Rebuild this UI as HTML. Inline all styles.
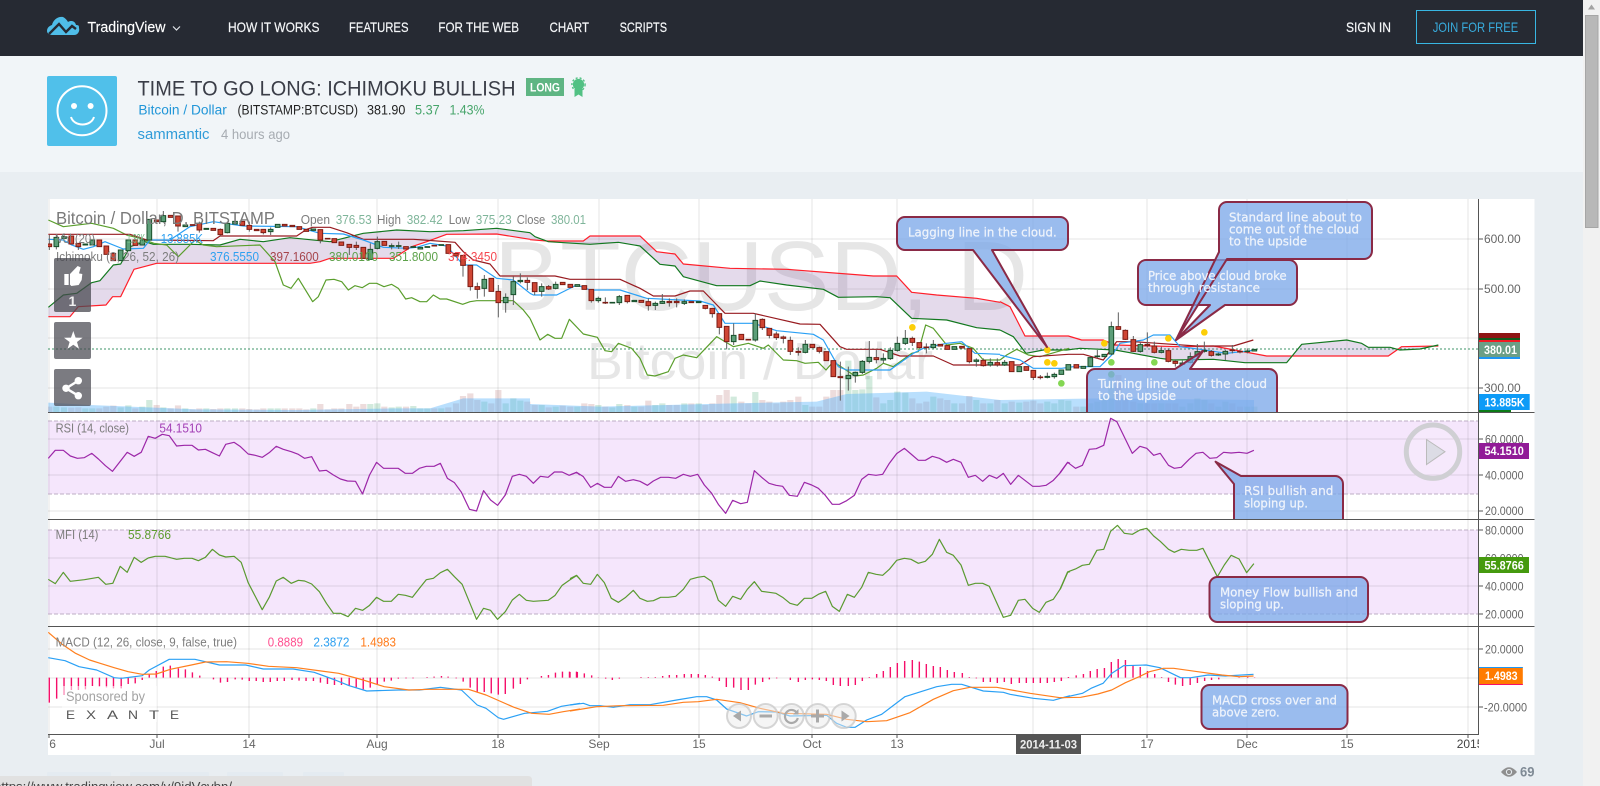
<!DOCTYPE html>
<html><head><meta charset="utf-8"><title>TIME TO GO LONG: ICHIMOKU BULLISH</title>
<style>
html,body{margin:0;padding:0;width:1600px;height:786px;overflow:hidden;background:#e9eef2}
svg{display:block;position:absolute;left:0;top:0}
svg *{vector-effect:non-scaling-stroke}
text{font-family:"Liberation Sans",Arial,sans-serif}
.ln{fill:none;stroke-width:1.2;stroke-linejoin:round}
.g{fill:#7d7d7d;font-size:12.5px}
.ax{fill:#666;font-size:12px}
.call{font-family:"DejaVu Sans",sans-serif;font-size:12.5px;fill:#eef3fb;stroke:#eef3fb;stroke-width:.25}
.box{fill:rgba(120,165,232,.75);stroke:#8a2a46;stroke-width:2;stroke-linejoin:round}
.wh{fill:#fff;font-weight:bold;font-size:12px}
.nav{fill:#f4f6f8;font-size:14px;stroke:#f4f6f8;stroke-width:.2}
</style></head><body>
<svg width="1600" height="786" viewBox="0 0 1600 786" xmlns="http://www.w3.org/2000/svg">
<defs>
<clipPath id="main"><rect x="48" y="199" width="1431" height="213"/></clipPath>
<clipPath id="rsi"><rect x="48" y="412" width="1431" height="107"/></clipPath>
<clipPath id="all"><rect x="48" y="199" width="1431" height="535"/></clipPath>
<clipPath id="ax"><rect x="48" y="734" width="1431" height="21"/></clipPath>
</defs>

<!-- header -->
<rect x="0" y="56" width="1583" height="116" fill="#f1f5f8"/>
<rect x="0" y="0" width="1583" height="56" fill="#262a33"/>
<path d="M47 31c0-3 2-5 5-6c1-5 6-9 11-8c2 1 4 3 5 5c3-2 7-1 8 3c3 0 3 1 3 3c1 3-1 7-5 7H52c-3 0-5-2-5-4z" fill="#4fbde8"/>
<path d="M49 34L59 24L66 32L72 26L76 29" fill="none" stroke="#262a33" stroke-width="2.4"/>
<text x="87.5" y="32" fill="#fff" font-size="15" textLength="78" lengthAdjust="spacingAndGlyphs" stroke="#fff" stroke-width=".15">TradingView</text>
<path d="M173 26.5L176.5 30L180 26.5" fill="none" stroke="#dfe3e8" stroke-width="1.2"/>
<text class="nav" x="228" y="32" textLength="91.5" lengthAdjust="spacingAndGlyphs">HOW IT WORKS</text>
<text class="nav" x="349" y="32" textLength="59.5" lengthAdjust="spacingAndGlyphs">FEATURES</text>
<text class="nav" x="438.4" y="32" textLength="80.6" lengthAdjust="spacingAndGlyphs">FOR THE WEB</text>
<text class="nav" x="549.5" y="32" textLength="39.5" lengthAdjust="spacingAndGlyphs">CHART</text>
<text class="nav" x="619.6" y="32" textLength="47.4" lengthAdjust="spacingAndGlyphs">SCRIPTS</text>
<text class="nav" x="1346" y="32" textLength="45" lengthAdjust="spacingAndGlyphs">SIGN IN</text>
<rect x="1416.5" y="10.5" width="119" height="33" fill="none" stroke="#38b6e2"/>
<text x="1432.7" y="32" fill="#38aadb" font-size="14" textLength="85.5" lengthAdjust="spacingAndGlyphs">JOIN FOR FREE</text>

<rect x="47" y="76" width="70" height="70" rx="2" fill="#50c0ea"/>
<circle cx="82" cy="110.7" r="24.5" fill="none" stroke="#fff" stroke-width="2"/>
<circle cx="74" cy="106" r="3" fill="#fff"/><circle cx="90.6" cy="106" r="3" fill="#fff"/>
<path d="M71 117c3 10 20 10 23 0" fill="none" stroke="#fff" stroke-width="2"/>

<text x="137.5" y="95.5" fill="#3a3d47" font-size="21" textLength="378" lengthAdjust="spacingAndGlyphs">TIME TO GO LONG: ICHIMOKU BULLISH</text>
<rect x="526" y="78" width="38" height="18" fill="#5fb583"/>
<text x="530" y="91.5" fill="#fff" font-weight="bold" font-size="12" textLength="30" lengthAdjust="spacingAndGlyphs">LONG</text>
<path d="M574.5 89h8v8l-4-2.5l-4 2.5z" fill="#52c184"/>
<circle cx="578.5" cy="84.5" r="5.6" fill="#52c184"/>
<circle cx="578.5" cy="84.5" r="6.6" fill="none" stroke="#52c184" stroke-width="1.4" stroke-dasharray="2 2"/>

<text x="138.4" y="114.5" fill="#2196d8" font-size="13.5" textLength="88.4" lengthAdjust="spacingAndGlyphs">Bitcoin / Dollar</text>
<text x="237.5" y="114.5" fill="#222" font-size="13.5" textLength="120.5" lengthAdjust="spacingAndGlyphs">(BITSTAMP:BTCUSD)</text>
<text x="367" y="114.5" fill="#222" font-size="13.5" textLength="38.4" lengthAdjust="spacingAndGlyphs">381.90</text>
<text x="415" y="114.5" fill="#47a56b" font-size="13.5" textLength="24.7" lengthAdjust="spacingAndGlyphs">5.37</text>
<text x="449.5" y="114.5" fill="#47a56b" font-size="13.5" textLength="35" lengthAdjust="spacingAndGlyphs">1.43%</text>
<text x="137.5" y="139" fill="#2f9bd8" font-size="15" textLength="72" lengthAdjust="spacingAndGlyphs">sammantic</text>
<text x="221" y="139" fill="#a7acb2" font-size="14" textLength="69" lengthAdjust="spacingAndGlyphs">4 hours ago</text>

<!-- chart base -->
<rect x="48" y="199" width="1486.500" height="556" fill="#fff"/>
<rect x="48" y="421" width="1431" height="73" fill="#f5e6fc"/>
<rect x="48" y="530" width="1431" height="84" fill="#f5e6fc"/>

<!-- grid -->
<path d="M49 199V734M157 199V734M249 199V734M377 199V734M498 199V734M599 199V734M699 199V734M812 199V734M897 199V734M1033 199V734M1147 199V734M1247 199V734M1347 199V734M1468 199V734" stroke="rgba(0,0,0,.1)" fill="none"/>
<path d="M48 239H1479M48 289H1479M48 338H1479M48 388H1479M48 439H1479M48 475H1479M48 511H1479M48 558H1479M48 586H1479M48 649H1479M48 678H1479M48 707H1479" stroke="rgba(0,0,0,.1)" fill="none"/>
<path d="M48 421H1479M48 494H1479M48 530H1479M48 614H1479" stroke="#bdaec4" stroke-dasharray="4 2" fill="none"/>

<g clip-path="url(#main)">
<text x="494" y="310" font-size="98" fill="#e6e6e6" textLength="534" lengthAdjust="spacingAndGlyphs">BTCUSD, D</text>
<text x="587" y="379" font-size="52" fill="#e6e6e6" textLength="346" lengthAdjust="spacingAndGlyphs">Bitcoin / Dollar</text>

<!-- volume bars -->
<g transform="translate(30 190) scale(.33333)" fill="none" stroke-width="6.2">
<path stroke="rgba(165,80,80,.2)" d="M58 650V666M124 653V666M145 652V666M208 655V666M229 650V666M250 647V666M316 655V666M380 645V666M422 655V666M444 646V666M488 658V666M508 655V666M550 657V666M571 655V666M637 655V666M658 657V666M680 658V666M700 655V666M764 655V666M787 655V666M808 655V666M829 658V666M871 642V666M893 658V666M913 655V666M934 655V666M958 642V666M979 650V666M1000 642V666M1063 650V666M1128 650V666M1213 655V666M1255 652V666M1278 640V666M1299 618V666M1321 610V666M1342 630V666M1384 640V666M1405 600V666M1492 635V666"/>
<path stroke="rgba(50,160,100,.22)" d="M79 650V666M102 652V666M166 655V666M187 655V666M272 652V666M295 646V666M337 650V666M358 630V666M400 652V666M466 655V666M529 655V666M592 655V666M615 655V666M722 655V666M743 655V666M850 655V666M1021 642V666M1042 640V666M1085 652V666M1106 650V666M1150 648V666M1171 655V666M1192 655V666M1234 655V666M1363 635V666M1427 640V666M1450 625V666M1471 632V666"/>
</g>
<g transform="translate(500 190) scale(.33333)" fill="none" stroke-width="6.2">
<path stroke="rgba(165,80,80,.2)" d="M104 645V666M146 652V666M188 647V666M211 650V666M253 640V666M274 642V666M316 650V666M382 645V666M424 650V666M445 632V666M508 645V666M530 645V666M574 640V666M616 645V666M637 640V666M658 615V666M680 600V666M724 635V666M745 640V666M787 630V666M808 635V666M829 640V666M850 635V666M871 630V666M895 620V666M937 650V666M958 650V666M979 620V666M1000 600V666M1021 600V666M1129 622V666M1237 625V666M1258 640V666M1279 635V666M1321 625V666M1342 630V666M1386 640V666M1408 618V666M1450 640V666M1492 630V666"/>
<path stroke="rgba(50,160,100,.22)" d="M125 645V666M167 650V666M232 650V666M295 645V666M337 652V666M358 642V666M403 650V666M466 645V666M487 640V666M553 640V666M596 640V666M701 620V666M766 606V666M916 645V666M1045 512V666M1066 600V666M1087 598V666M1108 558V666M1150 640V666M1171 630V666M1192 605V666M1216 608V666M1300 620V666M1363 640V666M1429 630V666M1471 640V666"/>
</g>
<g transform="translate(1000 190) scale(.33333)" fill="none" stroke-width="6.2">
<path stroke="rgba(165,80,80,.2)" d="M35 635V666M79 635V666M100 632V666M121 640V666M229 650V666M355 555V666M376 620V666M400 635V666M442 640V666M463 640V666M505 640V666M526 640V666M634 640V666M697 640V666M720 650V666"/>
<path stroke="rgba(50,160,100,.22)" d="M14 640V666M58 638V666M142 635V666M163 640V666M184 630V666M205 632V666M250 650V666M271 640V666M292 635V666M313 620V666M334 555V666M421 640V666M484 640V666M547 650V666M571 640V666M592 625V666M613 630V666M655 650V666M676 635V666M742 650V666M763 650V666"/>
</g>

<!-- volume MA area (over bars) -->
<g transform="translate(30 190) scale(.33333)">
<path d="M55 638L180 645L500 658L800 660L1100 655L1200 655L1300 625L1500 625L1500 670L55 670z" fill="rgba(80,175,250,.4)"/>
</g>
<g transform="translate(500 190) scale(.33333)">
<path d="M90 642L300 650L500 645L700 640L950 635L1040 612L1280 605L1500 630L1500 670L90 670z" fill="rgba(80,175,250,.4)"/>
</g>
<g transform="translate(1000 190) scale(.33333)">
<path d="M0 630L300 625L762 630L762 670L0 670z" fill="rgba(80,175,250,.4)"/>
</g>

<!-- dotted last price -->
<path d="M48 349H1479" stroke="#3f9468" stroke-dasharray="2 2" fill="none"/>

<!-- cloud + lines segment 1 -->
<g transform="translate(30 190) scale(.33333)">
<path fill="rgba(130,85,165,.22)" d="M55 352L100 315L140 310L185 278L210 272L250 225L272 222L300 170L345 155L370 163L480 163L570 165L630 148L700 155L780 143L900 155L1000 130L1100 120L1200 125L1300 122L1400 115L1500 128L1500 148L1400 132L1250 133L1190 155L1145 170L1090 205L900 205L870 215L840 220L380 220L312 238L272 320L248 320L228 345L145 350L120 380L55 380z"/>
<polyline class="ln" stroke="#ff1f2a" points="55,380 120,380 145,350 228,345 248,320 272,320 312,238 380,220 840,220 870,215 900,205 1090,205 1145,170 1190,155 1250,133 1400,132 1500,148"/>
<polyline class="ln" stroke="#12781f" points="55,352 100,315 140,310 185,278 210,272 250,225 272,222 300,170 345,155 370,163 480,163 570,165 630,148 700,155 780,143 900,155 1000,130 1100,120 1200,125 1300,122 1400,115 1500,128"/>
<polyline class="ln" stroke="#5a9e2c" points="55,90 100,110 185,100 250,115 290,135 330,145 372,160 410,165 445,200 495,150 520,165 560,170 690,165 735,215 760,285 783,295 805,265 848,335 865,320 888,270 912,268 935,275 955,300 975,287 997,293 1018,280 1040,280 1062,290 1085,283 1105,295 1127,327 1145,323 1170,335 1190,335 1210,315 1230,327 1250,327 1298,343 1320,335 1340,332 1450,332 1480,360 1500,385"/>
<polyline class="ln" stroke="#981b20" points="55,133 300,133 350,150 550,152 570,138 800,138 830,118 848,112 900,112 950,128 1000,148 1150,148 1180,150 1275,157 1300,185 1330,210 1380,222 1410,258 1500,258"/>
<polyline class="ln" stroke="#2aa0f5" points="55,148 100,150 125,165 160,178 190,170 225,155 280,177 340,175 360,150 420,150 480,110 550,95 640,108 800,110 870,130 940,132 1000,150 1060,172 1130,175 1160,172 1200,160 1250,168 1300,225 1340,225 1400,265 1450,270 1500,310"/>
<path fill="none" stroke="#5f5f5f" d="M58 135V180M79 135V178M102 130V150M145 160V180M400 63V98M444 78V125M508 95V128M571 115V138M592 95V130M658 95V125M700 118V133M722 112V135M871 119V160M958 163V195M979 155V180M1021 160V210M1042 140V178M1085 160V178M1106 155V177M1299 196V260M1321 226V302M1342 278V326M1363 255V320M1405 285V382M1427 310V368M1450 260V345M1471 250V280M1492 262V300"/>
<path fill="#cf4634" stroke="#7d1c14" d="M51 162h14v8h-14zM117 138h14v24h-14zM138 160h14v10h-14zM201 150h14v20h-14zM222 168h14v25h-14zM243 190h14v22h-14zM309 150h14v16h-14zM373 90h14v5h-14zM415 76h14v6h-14zM437 78h14v30h-14zM481 104h14v2h-14zM501 100h14v20h-14zM543 115h14v6h-14zM564 118h14v16h-14zM630 94h14v12h-14zM651 106h14v12h-14zM673 118h14v4h-14zM693 118h14v10h-14zM757 103h14v5h-14zM780 106h14v4h-14zM801 110h14v8h-14zM822 118h14v6h-14zM864 119h14v31h-14zM886 145h14v2h-14zM906 146h14v12h-14zM927 156h14v10h-14zM951 163h14v9h-14zM972 166h14v6h-14zM993 172h14v33h-14zM1056 154h14v12h-14zM1121 170h14v7h-14zM1206 166h14v2h-14zM1248 164h14v26h-14zM1271 190h14v8h-14zM1292 196h14v30h-14zM1314 226h14v64h-14zM1335 290h14v8h-14zM1377 265h14v39h-14zM1398 304h14v34h-14zM1485 271h14v6h-14z"/>
<path fill="#5c9e78" stroke="#184f2a" d="M72 142h14v28h-14zM95 140h14v5h-14zM159 162h14v3h-14zM180 150h14v15h-14zM265 180h14v32h-14zM288 150h14v32h-14zM330 150h14v15h-14zM351 88h14v62h-14zM393 77h14v18h-14zM459 105h14v5h-14zM522 115h14v3h-14zM585 100h14v28h-14zM608 94h14v8h-14zM715 118h14v7h-14zM736 103h14v9h-14zM843 117h14v4h-14zM1014 178h14v30h-14zM1035 155h14v20h-14zM1078 167h14v2h-14zM1099 167h14v2h-14zM1143 170h14v2h-14zM1164 172h14v5h-14zM1185 170h14v2h-14zM1227 164h14v2h-14zM1356 268h14v27h-14zM1420 322h14v16h-14zM1443 275h14v39h-14zM1464 271h14v4h-14z"/>
</g>

<!-- segment 2 -->
<g transform="translate(500 190) scale(.33333)">
<path fill="rgba(130,85,165,.22)" d="M90 128L105 140L145 155L270 163L355 157L420 168L480 223L525 228L550 260L650 287L750 287L780 273L860 285L970 298L1015 322L1130 320L1170 323L1235 385L1340 390L1430 413L1500 420L1500 337L1430 325L1310 315L1235 307L1190 258L1120 258L860 238L690 235L550 222L525 192L470 185L420 138L270 138L250 153L140 153L90 149z"/>
<polyline class="ln" stroke="#ff1f2a" points="90,149 140,153 250,153 270,138 420,138 470,185 525,192 550,222 690,235 860,238 1120,258 1190,258 1235,307 1310,315 1430,325 1500,337"/>
<polyline class="ln" stroke="#12781f" points="90,128 105,140 145,155 270,163 355,157 420,168 480,223 525,228 550,260 650,287 750,287 780,273 860,285 970,298 1015,322 1130,320 1170,323 1235,385 1340,390 1430,413 1500,420"/>
<polyline class="ln" stroke="#5a9e2c" points="90,385 120,450 143,433 165,445 185,445 208,388 250,432 292,442 315,482 335,485 355,460 395,475 420,505 442,555 465,558 505,545 525,505 550,495 590,503 650,440 680,458 700,470 745,460 790,475 805,465 850,510 890,512 915,520 955,517 978,540 1000,515 1065,558 1090,555 1130,535 1150,520 1180,530 1235,490 1255,485 1277,405 1300,415 1340,465 1380,460 1420,475 1450,510 1500,510"/>
<polyline class="ln" stroke="#981b20" points="90,258 165,258 210,268 360,268 420,295 460,318 525,318 570,303 610,303 675,370 760,370 900,402 960,403 1020,470 1040,478 1140,478 1200,498 1300,498 1360,525 1500,525"/>
<polyline class="ln" stroke="#2aa0f5" points="90,310 100,315 170,315 230,285 270,300 360,300 440,325 600,333 640,345 675,400 760,400 830,422 940,433 970,450 1015,530 1040,540 1170,540 1240,490 1270,475 1340,460 1385,455 1425,490 1500,493"/>
<path fill="none" stroke="#5f5f5f" d="M104 278V315M125 280V320M146 285V300M167 275V298M274 298V338M295 320V338M316 322V342M358 315V345M382 315V340M445 325V362M466 335V360M487 312V342M508 325V350M530 325V352M553 328V345M616 346V358M637 355V383M658 371V433M680 455V478M701 400V465M766 370V455M787 385V420M808 415V445M829 425V450M850 437V460M871 440V495M895 472V497M916 450V490M958 470V490M1000 512V560M1021 515V632M1045 530V602M1066 545V578M1087 510V552M1108 453V520M1129 480V520M1150 490V520M1171 472V510M1192 440V485M1216 420V465M1237 440V468M1279 460V490M1300 450V475M1408 476V520M1429 505V530M1450 505V530M1471 505V530M1492 505V530"/>
<path fill="#cf4634" stroke="#7d1c14" d="M97 278h14v27h-14zM139 290h14v7h-14zM181 277h14v7h-14zM204 283h14v9h-14zM246 287h14v11h-14zM267 298h14v34h-14zM309 337h14v2h-14zM375 316h14v19h-14zM417 331h14v6h-14zM438 335h14v12h-14zM501 334h14v4h-14zM523 334h14v4h-14zM567 335h14v3h-14zM609 346h14v9h-14zM630 355h14v16h-14zM651 371h14v41h-14zM673 409h14v46h-14zM717 433h14v16h-14zM738 448h14v2h-14zM780 388h14v25h-14zM801 415h14v21h-14zM822 432h14v11h-14zM843 441h14v4h-14zM864 451h14v33h-14zM888 484h14v3h-14zM930 463h14v10h-14zM951 473h14v11h-14zM972 485h14v27h-14zM993 512h14v48h-14zM1014 560h14v3h-14zM1122 503h14v6h-14zM1230 445h14v12h-14zM1251 458h14v15h-14zM1272 471h14v2h-14zM1314 463h14v5h-14zM1335 467h14v11h-14zM1379 469h14v5h-14zM1401 476h14v39h-14zM1443 511h14v16h-14zM1485 518h14v7h-14z"/>
<path fill="#5c9e78" stroke="#184f2a" d="M118 290h14v14h-14zM160 283h14v12h-14zM225 284h14v5h-14zM288 325h14v7h-14zM330 337h14v2h-14zM351 320h14v18h-14zM396 331h14v4h-14zM459 340h14v6h-14zM480 334h14v6h-14zM546 335h14v5h-14zM589 335h14v3h-14zM694 436h14v19h-14zM759 391h14v59h-14zM909 463h14v24h-14zM1038 556h14v10h-14zM1059 547h14v10h-14zM1080 514h14v33h-14zM1101 502h14v12h-14zM1143 505h14v5h-14zM1164 481h14v25h-14zM1185 460h14v21h-14zM1209 445h14v15h-14zM1293 463h14v10h-14zM1356 470h14v8h-14zM1422 510h14v4h-14zM1464 517h14v8h-14z"/>
</g>

<!-- segment 3 -->
<g transform="translate(1000 190) scale(.33333)">
<path fill="rgba(130,85,165,.22)" d="M0 420L40 440L78 490L130 480L200 480L240 475L345 480L400 490L480 505L520 510L640 508L735 518L860 518L905 463L1040 450L1085 460L1105 472L1170 472L1200 480L1260 477L1315 465L1315 468L1205 470L1165 498L800 498L640 468L540 470L345 465L310 450L245 450L205 438L75 438L30 350L0 335z"/>
<polyline class="ln" stroke="#ff1f2a" points="0,335 30,350 75,438 205,438 245,450 310,450 345,465 540,470 640,468 800,498 1165,498 1205,470 1315,468"/>
<polyline class="ln" stroke="#12781f" points="0,420 40,440 78,490 130,480 200,480 240,475 345,480 400,490 480,505 520,510 640,508 735,518 860,518 905,463 1040,450 1085,460 1105,472 1170,472 1200,480 1260,477 1315,465"/>
<polyline class="ln" stroke="#5a9e2c" points="0,510 20,495 50,478 85,495 120,500 207,475"/>
<polyline class="ln" stroke="#981b20" points="0,525 60,525 100,500 205,493 250,493 310,510 350,455 400,455 590,468 640,468 700,468 760,450"/>
<polyline class="ln" stroke="#2aa0f5" points="0,495 60,510 100,535 185,535 220,530 300,530 340,490 360,460 430,450 460,435 510,435 540,470 600,478 680,490 770,480"/>
<path fill="none" stroke="#5f5f5f" d="M14 510V528M100 541V570M121 555V568M142 548V565M163 548V566M271 500V530M292 480V505M334 395V495M355 367V420M376 418V450M400 438V486M421 458V488M442 427V472M463 455V490M484 470V490M505 475V517M526 510V530M547 512V527M571 487V520M592 462V500M613 455V488M634 480V500M655 488V498M676 480V510M697 465V490M720 478V490M742 475V490"/>
<path fill="#cf4634" stroke="#7d1c14" d="M28 515h14v30h-14zM72 530h14v11h-14zM93 541h14v21h-14zM114 561h14v2h-14zM222 524h14v10h-14zM348 410h14v8h-14zM369 421h14v27h-14zM393 449h14v35h-14zM435 463h14v4h-14zM456 468h14v19h-14zM498 482h14v32h-14zM519 514h14v6h-14zM627 485h14v11h-14zM690 480h14v2h-14zM713 484h14v2h-14z"/>
<path fill="#5c9e78" stroke="#184f2a" d="M7 517h14v8h-14zM51 530h14v15h-14zM135 559h14v3h-14zM156 553h14v7h-14zM177 540h14v13h-14zM198 524h14v16h-14zM243 529h14v6h-14zM264 503h14v26h-14zM285 498h14v2h-14zM306 493h14v7h-14zM327 410h14v82h-14zM414 464h14v20h-14zM477 482h14v5h-14zM540 519h14v4h-14zM564 500h14v17h-14zM585 485h14v14h-14zM606 481h14v3h-14zM648 492h14v3h-14zM669 484h14v8h-14zM735 483h14v2h-14zM756 478h14v5h-14z"/>
<g fill="#fcce07">
<circle cx="142" cy="480" r="10"/><circle cx="142" cy="517" r="10"/><circle cx="163" cy="520" r="10"/><circle cx="313" cy="460" r="10"/><circle cx="505" cy="445" r="10"/><circle cx="613" cy="427" r="10"/><circle cx="-263" cy="412" r="10"/>
</g>
<g fill="#84d753">
<circle cx="184" cy="580" r="10"/><circle cx="334" cy="517" r="10"/><circle cx="334" cy="553" r="10"/><circle cx="463" cy="517" r="10"/>
</g>
</g>
</g>

<!-- RSI -->
<g clip-path="url(#all)" class="x">
<g transform="translate(30 400) scale(.35077 .33333)">
<polyline class="ln" stroke="#9c27a8" points="52,175 72,151 95,151 115,168 135,175 155,173 176,160 195,177 215,197 235,214 277,157 297,169 317,157 337,109 357,115 377,103 397,107 418,138 440,136 462,136 480,150 500,148 520,158 540,168 558,133 582,127 600,140 622,162 642,166 662,172 682,158 702,139 722,148 745,155 765,163 783,175 803,170 825,213 845,211 865,225 885,237 905,243 928,244 948,282 968,225 988,187 1008,205 1050,205 1070,220 1090,220 1110,205 1130,199 1152,199 1170,190 1190,235 1210,248 1230,277 1253,328 1273,333 1293,272 1313,300 1333,316 1355,285 1375,229 1395,223 1415,229 1435,250 1455,229 1477,232 1495,216 1517,216 1537,226 1558,217 1568,225"/>
<polyline class="ln" stroke="#5a9a30" points="52,538 72,551 95,517 115,544 155,539 195,532 216,553 236,550 257,499 277,517 297,472 317,487 337,474 357,469 385,469 418,478 440,475 462,475 480,482 500,472 520,448 540,465 558,471 582,469 602,487 622,548 662,629 682,592 702,543 722,532 745,550 765,541 783,543 803,552 825,575 845,610 865,640 885,640 907,650 928,625 948,631 968,616 988,592 1008,604 1030,604 1050,583 1070,586 1090,592 1110,565 1130,539 1150,535 1170,518 1190,508 1210,530 1232,553 1273,658 1293,625 1313,631 1333,658 1355,635 1375,600 1395,583 1415,601 1435,604 1477,601 1497,586 1517,556 1537,541 1558,527 1568,537"/>
</g>
<g transform="translate(570 400) scale(.33333)">
<polyline class="ln" stroke="#9c27a8" points="0,225 20,217 40,230 62,262 82,250 103,262 124,262 145,229 167,244 190,239 210,244 232,256 250,243 272,232 295,232 317,235 340,223 361,229 383,223 403,255 425,280 445,313 467,340 488,301 512,311 532,307 553,212 575,232 597,250 618,256 638,259 658,286 682,289 703,247 725,255 745,265 765,285 787,313 808,313 830,302 853,286 875,238 895,223 918,226 938,223 958,190 980,161 1003,145 1023,162 1045,181 1066,181 1087,169 1108,175 1130,187 1150,178 1173,187 1195,232 1216,226 1238,244 1258,226 1280,235 1300,220 1322,253 1345,226 1388,259 1408,259 1428,256 1450,241 1472,217 1493,187 1500,190"/>
<polyline class="ln" stroke="#5a9a30" points="0,536 20,526 40,550 62,553 82,523 103,548 124,595 145,607 167,592 190,571 210,595 232,604 250,602 272,592 295,592 317,589 340,568 361,538 383,532 403,529 425,544 445,601 467,619 488,589 512,598 532,568 553,545 575,574 597,577 618,580 638,592 660,610 682,616 703,595 725,595 745,583 767,574 787,619 808,634 832,583 853,592 875,562 895,517 918,523 938,526 958,508 980,481 1003,475 1023,478 1045,490 1066,484 1087,463 1108,418 1130,457 1150,466 1173,495 1195,556 1216,550 1238,550 1258,559 1300,652 1322,646 1345,601 1365,598 1388,625 1408,637 1428,607 1450,598 1472,565 1493,517 1500,515"/>
</g>
<g transform="translate(1060 400) scale(.34439 .33333)">
<polyline class="ln" stroke="#9c27a8" points="0,218 22,187 45,205 65,196 85,148 105,146 127,136 147,55 165,65 210,160 232,139 252,145 272,166 291,160 315,196 332,205 352,202 375,178 395,160 415,157 435,175 455,173 475,157 497,159 520,157 543,160 563,151"/>
<polyline class="ln" stroke="#5a9a30" points="0,568 22,516 45,507 65,496 85,493 107,451 127,448 147,394 167,376 187,400 210,403 232,390 252,385 272,408 291,424 315,448 332,457 352,448 375,451 397,451 415,445 457,530 477,495 497,466 520,477 542,518 563,491"/>
</g>

<!-- MACD -->
<g transform="translate(30 610) scale(.35077 .33333)">
<path fill="none" stroke="#f50f6a" stroke-width="1.4" d="M55 203V278M76 203V266M97 203V255M118 203V240M138 203V240M158 203V238M178 203V228M198 203V230M218 203V232M238 203V235M260 203V235M280 203V222M300 203V220M320 203V210M340 203V193M360 203V183M380 203V170M400 203V167M423 203V175M443 203V178M463 203V187M484 203V197M523 203V208M543 203V218M563 203V216M585 203V208M605 203V209M625 203V213M645 203V213M665 203V216M685 203V216M705 203V213M725 203V213M747 203V210M767 203V212M787 203V213M808 203V213M828 203V218M848 203V222M868 203V225M888 203V225M910 203V227M930 203V232M950 203V238M970 203V233M990 203V225M1010 203V215M1030 203V212M1050 203V206M1072 203V205M1092 203V205M1132 203V201M1152 203V200M1173 203V198M1192 203V200M1215 203V205M1235 203V215M1255 203V233M1275 203V245M1295 203V246M1315 203V250M1335 203V254M1355 203V252M1378 203V236M1398 203V222M1418 203V208M1458 203V198M1478 203V195M1498 203V188M1518 203V185M1538 203V185M1558 203V185"/>
<polyline class="ln" stroke="#2aa0f5" stroke-width="1.4" points="52,143 100,152 140,170 190,180 240,203 260,205 320,197 340,180 397,148 470,148 540,165 615,165 665,177 750,177 810,187 870,210 910,227 960,243 1050,240 1110,240 1170,232 1230,240 1275,285 1300,295 1335,323 1350,328 1410,310 1475,304 1515,289 1568,280"/>
<polyline class="ln" stroke="#ff7f1e" stroke-width="1.4" points="52,67 92,103 130,130 170,150 200,160 240,173 280,185 320,193 360,192 400,178 460,165 500,156 560,155 620,160 680,169 760,173 830,183 880,190 950,210 1010,230 1080,240 1140,238 1250,238 1300,255 1380,292 1430,310 1480,313 1520,305 1568,297"/>
</g>
<g transform="translate(570 610) scale(.33333)">
<path fill="none" stroke="#f50f6a" stroke-width="1.4" d="M0 203V186M22 203V186M43 203V190M65 203V196M85 203V202M107 203V206M127 203V210M148 203V206M213 203V201M235 203V201M256 203V201M278 203V198M298 203V195M320 203V195M343 203V192M364 203V192M385 203V192M406 203V195M427 203V200M448 203V213M469 203V231M491 203V233M513 203V240M535 203V240M556 203V224M578 203V216M598 203V208M620 203V205M661 203V210M685 203V216M706 203V210M727 203V208M748 203V210M769 203V213M790 203V225M811 203V228M835 203V228M856 203V225M877 203V213M898 203V201M920 203V192M940 203V183M961 203V171M982 203V159M1004 203V153M1027 203V150M1048 203V155M1069 203V162M1090 203V168M1111 203V171M1132 203V180M1153 203V186M1177 203V189M1198 203V201M1219 203V205M1240 203V216M1261 203V216M1282 203V219M1303 203V216M1324 203V222M1348 203V219M1369 203V219M1390 203V219M1411 203V219M1432 203V219M1453 203V216M1474 203V213M1495 203V201"/>
<polyline class="ln" stroke="#2aa0f5" stroke-width="1.4" points="0,285 40,280 60,287 90,287 130,292 180,284 240,284 320,270 380,260 410,260 440,270 470,297 530,318 565,305 620,306 660,318 770,316 800,340 830,352 855,352 890,330 935,313 1005,260 1100,230 1145,223 1175,223 1240,243 1300,247 1320,253 1390,265 1450,271 1500,257"/>
<polyline class="ln" stroke="#ff7f1e" stroke-width="1.4" points="0,303 80,290 150,287 280,286 340,277 385,275 440,268 510,278 570,295 640,310 770,313 830,328 890,335 950,332 1020,308 1090,268 1150,242 1200,232 1280,232 1380,250 1470,263 1500,262"/>
</g>
<g transform="translate(1060 610) scale(.34439 .33333)">
<path fill="none" stroke="#f50f6a" stroke-width="1.4" d="M4 203V208M25 203V204M47 203V196M68 203V192M88 203V183M108 203V177M129 203V174M149 203V156M169 203V147M190 203V150M212 203V165M233 203V171M254 203V183M275 203V192M295 203V201M315 203V216M335 203V224M356 203V228M378 203V225M399 203V219M420 203V213M440 203V210M461 203V208M520 203V204M545 203V201M565 203V204"/>
<polyline class="ln" stroke="#2aa0f5" stroke-width="1.4" points="0,265 65,250 90,235 125,220 150,190 185,167 250,165 290,173 350,203 380,203 430,195 480,198 562,193"/>
<polyline class="ln" stroke="#ff7f1e" stroke-width="1.4" points="0,263 60,262 110,252 150,240 190,218 230,200 260,185 300,175 330,175 400,185 470,195 520,200 562,198"/>
</g>
</g>

<!-- sponsored -->
<rect x="62" y="686" width="95" height="36" fill="rgba(255,255,255,.55)"/>
<text x="66" y="701" fill="#a3a3a3" font-size="14" textLength="79" lengthAdjust="spacingAndGlyphs">Sponsored by</text>
<g fill="#555" font-size="11.5">
<text x="66" y="719" textLength="9" lengthAdjust="spacingAndGlyphs">E</text>
<text x="86" y="719" textLength="10" lengthAdjust="spacingAndGlyphs">X</text>
<text x="107" y="719" textLength="11" lengthAdjust="spacingAndGlyphs">A</text>
<text x="128" y="719" textLength="10" lengthAdjust="spacingAndGlyphs">N</text>
<text x="149" y="719" textLength="10" lengthAdjust="spacingAndGlyphs">T</text>
<text x="170" y="719" textLength="9" lengthAdjust="spacingAndGlyphs">E</text>
</g>

<!-- nav circles -->
<g fill="rgba(235,235,235,.5)" stroke="rgba(200,200,200,.75)" stroke-width="2">
<circle cx="739" cy="716" r="12"/><circle cx="765.700" cy="716" r="12"/><circle cx="791.700" cy="716" r="12"/><circle cx="817.700" cy="716" r="12"/><circle cx="843.700" cy="716" r="12"/>
</g>
<g fill="#a9a9a9">
<path d="M733 716l8-5.500v11z"/><path d="M759.500 714.500h12.500v3h-12.500z"/><path d="M811 714.500h13v3h-13zM816 709.500h3v13h-3z"/><path d="M849.500 716l-8-5.500v11z"/>
</g>
<path d="M797 713a6.500 6.500 0 1 0 .8 5" fill="none" stroke="#a9a9a9" stroke-width="2.200"/><path d="M798.500 709v5.500h-5.500z" fill="#a9a9a9"/>

<!-- play -->
<circle cx="1433" cy="451.700" r="26.700" fill="rgba(255,255,255,.12)" stroke="#cfcfd3" stroke-width="5"/>
<path d="M1426.500 439.500L1445 451.700L1426.500 464.500z" fill="#dcdce5" stroke="#bbb"/>

<!-- callouts -->
<path class="box" d="M905 217H1060a8 8 0 0 1 8 8V242a8 8 0 0 1-8 8H992L1047 347L973 250H905a8 8 0 0 1-8-8V225a8 8 0 0 1 8-8z"/>
<text class="call" x="908" y="236.500" textLength="148.700" lengthAdjust="spacingAndGlyphs">Lagging line in the cloud.</text>
<path class="box" d="M1146 260H1289a8 8 0 0 1 8 8V297a8 8 0 0 1-8 8H1225L1176 340L1210 305H1146a8 8 0 0 1-8-8V268a8 8 0 0 1 8-8z"/>
<path class="box" d="M1227 202H1364a8 8 0 0 1 8 8V251a8 8 0 0 1-8 8H1227L1176 340L1219 252V210a8 8 0 0 1 8-8z"/>
<text class="call" x="1148" y="280" textLength="138.700" lengthAdjust="spacingAndGlyphs">Price above cloud broke</text>
<text class="call" x="1148" y="292" textLength="112" lengthAdjust="spacingAndGlyphs">through resistance</text>
<text class="call" x="1229" y="221.500" textLength="133" lengthAdjust="spacingAndGlyphs">Standard line about to</text>
<text class="call" x="1229" y="233.500" textLength="130" lengthAdjust="spacingAndGlyphs">come out of the cloud</text>
<text class="call" x="1229" y="245.500" textLength="78" lengthAdjust="spacingAndGlyphs">to the upside</text>
<g clip-path="url(#main)">
<path class="box" d="M1095 369H1175L1203 351L1190 369H1269a8 8 0 0 1 8 8V420H1087V377a8 8 0 0 1 8-8z"/>
<text class="call" x="1098" y="388" textLength="169" lengthAdjust="spacingAndGlyphs">Turning line out of the cloud</text>
<text class="call" x="1098" y="400" textLength="78" lengthAdjust="spacingAndGlyphs">to the upside</text>
</g>
<g clip-path="url(#rsi)">
<path class="box" d="M1215.600 461.700L1241 476H1335a8 8 0 0 1 8 8V530H1234V484z"/>
<text class="call" x="1244" y="495" textLength="89.400" lengthAdjust="spacingAndGlyphs">RSI bullish and</text>
<text class="call" x="1244" y="507.500" textLength="64" lengthAdjust="spacingAndGlyphs">sloping up.</text>
</g>
<rect class="box" x="1209.500" y="577" width="158.500" height="45" rx="8"/>
<text class="call" x="1220" y="596.500" textLength="138" lengthAdjust="spacingAndGlyphs">Money Flow bullish and</text>
<text class="call" x="1220" y="608.500" textLength="64" lengthAdjust="spacingAndGlyphs">sloping up.</text>
<rect class="box" x="1201.500" y="685" width="146" height="44" rx="8"/>
<text class="call" x="1212" y="704.300" textLength="125" lengthAdjust="spacingAndGlyphs">MACD cross over and</text>
<text class="call" x="1212" y="716.700" textLength="67.700" lengthAdjust="spacingAndGlyphs">above zero.</text>

<!-- legends -->
<text x="56" y="224" fill="#7a7a7a" font-size="17.500" textLength="219" lengthAdjust="spacingAndGlyphs">Bitcoin / Dollar, D, BITSTAMP</text>
<text class="g" x="300.700" y="224" textLength="29.300" lengthAdjust="spacingAndGlyphs">Open</text>
<text class="g" x="335.700" y="224" style="fill:#7fb59a" textLength="36" lengthAdjust="spacingAndGlyphs">376.53</text>
<text class="g" x="377" y="224" textLength="24" lengthAdjust="spacingAndGlyphs">High</text>
<text class="g" x="406.700" y="224" style="fill:#7fb59a" textLength="36" lengthAdjust="spacingAndGlyphs">382.42</text>
<text class="g" x="448.700" y="224" textLength="21.300" lengthAdjust="spacingAndGlyphs">Low</text>
<text class="g" x="475.700" y="224" style="fill:#7fb59a" textLength="36" lengthAdjust="spacingAndGlyphs">375.23</text>
<text class="g" x="516.700" y="224" textLength="28.600" lengthAdjust="spacingAndGlyphs">Close</text>
<text class="g" x="551" y="224" style="fill:#7fb59a" textLength="35" lengthAdjust="spacingAndGlyphs">380.01</text>
<text class="g" x="56" y="243" textLength="39" lengthAdjust="spacingAndGlyphs">Vol (20)</text>
<text class="g" x="127" y="243" style="fill:#6db57f" textLength="18" lengthAdjust="spacingAndGlyphs">1.38K</text>
<text class="g" x="160.700" y="243" style="fill:#2ea0f0" textLength="42.300" lengthAdjust="spacingAndGlyphs">13.885K</text>
<text class="g" x="56" y="261" textLength="123" lengthAdjust="spacingAndGlyphs">Ichimoku (9, 26, 52, 26)</text>
<text class="g" x="210" y="261" style="fill:#2ea0f0" textLength="49" lengthAdjust="spacingAndGlyphs">376.5550</text>
<text class="g" x="270" y="261" style="fill:#a5434a" textLength="48.700" lengthAdjust="spacingAndGlyphs">397.1600</text>
<text class="g" x="329" y="261" style="fill:#5da24a" textLength="49" lengthAdjust="spacingAndGlyphs">380.0100</text>
<text class="g" x="389" y="261" style="fill:#5da24a" textLength="49" lengthAdjust="spacingAndGlyphs">351.8000</text>
<text class="g" x="448" y="261" style="fill:#f5474f" textLength="49" lengthAdjust="spacingAndGlyphs">374.3450</text>

<text class="g" x="55.600" y="432.700" textLength="73.400" lengthAdjust="spacingAndGlyphs">RSI (14, close)</text>
<text class="g" x="159.400" y="432.700" style="fill:#a23fb5" textLength="42.600" lengthAdjust="spacingAndGlyphs">54.1510</text>
<text class="g" x="55.600" y="539" textLength="42.800" lengthAdjust="spacingAndGlyphs">MFI (14)</text>
<text class="g" x="128" y="539" style="fill:#5b9b2c" textLength="43" lengthAdjust="spacingAndGlyphs">55.8766</text>
<text class="g" x="55.600" y="646.700" textLength="181.400" lengthAdjust="spacingAndGlyphs">MACD (12, 26, close, 9, false, true)</text>
<text class="g" x="267.800" y="646.700" style="fill:#ff4f8f" textLength="35.200" lengthAdjust="spacingAndGlyphs">0.8889</text>
<text class="g" x="313.400" y="646.700" style="fill:#2fa0f0" textLength="36.100" lengthAdjust="spacingAndGlyphs">2.3872</text>
<text class="g" x="360.400" y="646.700" style="fill:#ff7b1a" textLength="35.600" lengthAdjust="spacingAndGlyphs">1.4983</text>

<!-- side buttons -->
<rect x="54" y="258" width="37" height="54" rx="2" fill="rgba(72,72,80,.75)"/>
<rect x="54" y="322" width="37" height="37" rx="2" fill="rgba(72,72,80,.72)"/>
<rect x="54" y="369" width="37" height="37" rx="2" fill="rgba(72,72,80,.72)"/>
<g transform="translate(30 190) scale(.33333)" fill="#fff">
<path d="M103 252h13v33h-13z"/>
<path d="M120 252L143 228L152 232L147 250L157 252L155 270L146 285L124 288L120 284z"/>
</g>
<text x="68.500" y="306" fill="#f0f0f0" font-size="14" font-weight="bold">1</text>
<path d="M73.300 331L75.600 337.600L82.600 337.800L77 342L79 348.800L73.300 344.800L67.600 348.800L69.600 342L64 337.800L71 337.600z" fill="#fff"/>
<path d="M78.300 380.700L66 388.300L78.300 395.700" fill="none" stroke="#fff" stroke-width="2.400"/>
<circle cx="78.300" cy="380.700" r="3.700" fill="#fff"/><circle cx="66" cy="388.300" r="3.700" fill="#fff"/><circle cx="78.300" cy="395.700" r="3.700" fill="#fff"/>

<!-- panes separators + axis -->
<path d="M48 412.500H1534.500M48 519.500H1534.500M48 626.500H1534.500M48 734.500H1479" stroke="#555" fill="none"/>
<path d="M1478.500 199V734" stroke="#555" fill="none"/>
<path d="M1479 239h4M1479 289h4M1479 338h4M1479 388h4M1479 439h4M1479 451h4M1479 475h4M1479 511h4M1479 530h4M1479 565h4M1479 586h4M1479 614h4M1479 649h4M1479 678h4M1479 707h4M49 734v4M157 734v4M249 734v4M377 734v4M498 734v4M599 734v4M699 734v4M812 734v4M897 734v4M1147 734v4M1247 734v4M1347 734v4M1468 734v4" stroke="#555" fill="none"/>

<text class="ax" x="1484" y="243">600.00</text>
<text class="ax" x="1484" y="293">500.00</text>
<text class="ax" x="1484" y="392">300.00</text>
<rect x="1479" y="333" width="41" height="5" fill="#8e1414"/>
<rect x="1479" y="338" width="41" height="2" fill="#0f5a1c"/>
<rect x="1479" y="340" width="41" height="2" fill="#f01c24"/>
<rect x="1479" y="342" width="41" height="15" fill="#6b9f86"/>
<rect x="1479" y="357" width="41" height="2" fill="#1e96f3"/>
<text class="wh" x="1484" y="354" textLength="33" lengthAdjust="spacingAndGlyphs">380.01</text>
<rect x="1479" y="410" width="32" height="2" fill="#0c7a16"/>
<rect x="1479" y="394" width="50.700" height="16" fill="#0d9bf7"/>
<text class="wh" x="1484.500" y="406.500" textLength="40" lengthAdjust="spacingAndGlyphs">13.885K</text>

<g class="ax">
<text class="ax" x="1485" y="443.500" textLength="38.500" lengthAdjust="spacingAndGlyphs">60.0000</text>
<text class="ax" x="1485" y="479.500" textLength="38.500" lengthAdjust="spacingAndGlyphs">40.0000</text>
<text class="ax" x="1485" y="515" textLength="38.500" lengthAdjust="spacingAndGlyphs">20.0000</text>
<text class="ax" x="1485" y="534.500" textLength="38.500" lengthAdjust="spacingAndGlyphs">80.0000</text>
<text class="ax" x="1485" y="562.500" textLength="38.500" lengthAdjust="spacingAndGlyphs">60.0000</text>
<text class="ax" x="1485" y="590.500" textLength="38.500" lengthAdjust="spacingAndGlyphs">40.0000</text>
<text class="ax" x="1485" y="618.500" textLength="38.500" lengthAdjust="spacingAndGlyphs">20.0000</text>
<text class="ax" x="1485" y="653.500" textLength="38.500" lengthAdjust="spacingAndGlyphs">20.0000</text>
<text class="ax" x="1484" y="711.500" textLength="43" lengthAdjust="spacingAndGlyphs">-20.0000</text>
</g>
<rect x="1479" y="443" width="50" height="16" fill="#911b97"/>
<text class="wh" x="1484.500" y="455" textLength="39.300" lengthAdjust="spacingAndGlyphs">54.1510</text>
<rect x="1479" y="557" width="50" height="16" fill="#459a0e"/>
<text class="wh" x="1484.500" y="569.500" textLength="39.300" lengthAdjust="spacingAndGlyphs">55.8766</text>
<rect x="1479" y="667" width="43.800" height="18" fill="#ff7b00"/>
<rect x="1479" y="667" width="43.800" height="1" fill="#1e96f3"/>
<rect x="1479" y="684" width="43.800" height="1" fill="#f50f6a"/>
<text class="wh" x="1485" y="680" textLength="32.600" lengthAdjust="spacingAndGlyphs">1.4983</text>

<!-- time axis -->
<text class="ax" x="49.300" y="748">6</text>
<text class="ax" x="157" y="748" text-anchor="middle">Jul</text>
<text class="ax" x="249" y="748" text-anchor="middle">14</text>
<text class="ax" x="377" y="748" text-anchor="middle">Aug</text>
<text class="ax" x="498" y="748" text-anchor="middle">18</text>
<text class="ax" x="599" y="748" text-anchor="middle">Sep</text>
<text class="ax" x="699" y="748" text-anchor="middle">15</text>
<text class="ax" x="812" y="748" text-anchor="middle">Oct</text>
<text class="ax" x="897" y="748" text-anchor="middle">13</text>
<text class="ax" x="1147" y="748" text-anchor="middle">17</text>
<text class="ax" x="1247" y="748" text-anchor="middle">Dec</text>
<text class="ax" x="1347" y="748" text-anchor="middle">15</text>
<g clip-path="url(#ax)"><text class="ax" x="1456.700" y="748" style="fill:#444">2015</text></g>
<rect x="1016" y="734" width="65" height="20" fill="#555"/>
<text class="wh" x="1020" y="748.500" style="fill:#eee" textLength="57" lengthAdjust="spacingAndGlyphs">2014-11-03</text>

<!-- footer -->
<path d="M47 776V773q0-1 1-1H110q1 0 1 1v3zM130 776V773q0-1 1-1H208q1 0 1 1v3zM227 776V773q0-1 1-1H282q1 0 1 1v3zM303 776V773q0-1 1-1H343q1 0 1 1v3z" fill="#e4ebf1"/>
<path d="M0 776H528q4 0 4 4V786H0z" fill="#e1e1e1"/>
<text x="-6" y="791" fill="#444" font-size="13" textLength="238" lengthAdjust="spacingAndGlyphs">https://www.tradingview.com/v/9jdVcvbn/</text>
<path d="M1501 772q8-9.500 16 0q-8 9.500-16 0z" fill="#8f8f8f"/><circle cx="1509" cy="772" r="2.600" fill="#8f8f8f" stroke="#e9eef2"/>
<text x="1520" y="776.500" fill="#7f8a95" font-weight="bold" font-size="14" textLength="14.500" lengthAdjust="spacingAndGlyphs">69</text>

<!-- scrollbar -->
<rect x="1583" y="0" width="17" height="786" fill="#f1f1f1"/>
<path d="M1591.500 4.500L1595 9.500H1588z" fill="#a3a3a3"/>
<rect x="1585.500" y="15.500" width="12.500" height="212" fill="#b8b8b8" stroke="#a6a6a6"/>
</svg>
</body></html>
